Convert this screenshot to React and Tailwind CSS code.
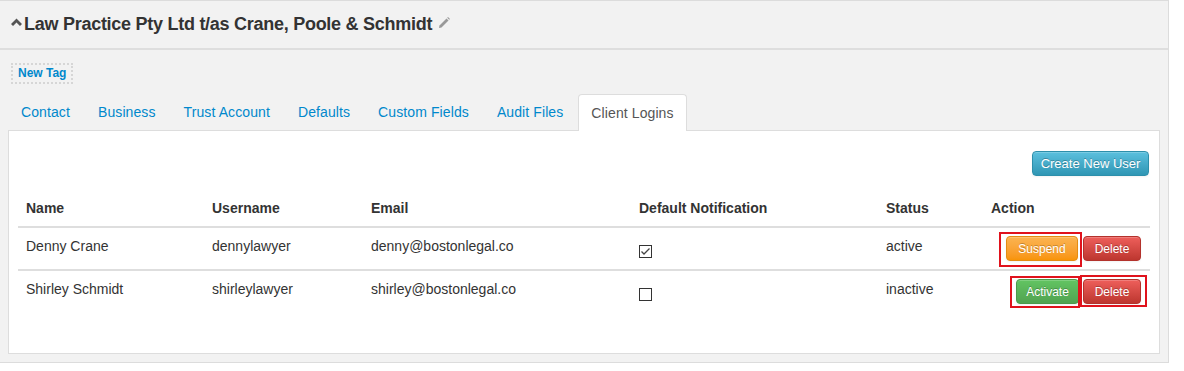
import React from "react";

const font = { fontFamily: '"Liberation Sans", Arial, sans-serif' };

function Btn({ children, kind, className = "" }) {
  const styles = {
    warning: "bg-gradient-to-b from-[#fbb450] to-[#f89406] border-[#e38d13]",
    danger: "bg-gradient-to-b from-[#ee5f5b] to-[#bd362f] border-[#b3322c]",
    success: "bg-gradient-to-b from-[#62c462] to-[#51a351] border-[#4b9a4b]",
    info: "bg-gradient-to-b from-[#5bc0de] to-[#2f96b4] border-[#2d8fab]",
  };
  return (
    <span
      className={`inline-flex items-center justify-center h-[25px] rounded-[4px] border text-white text-[12px] leading-none [text-shadow:0_-1px_0_rgba(0,0,0,0.25)] shadow-[inset_0_1px_0_rgba(255,255,255,0.2),0_1px_2px_rgba(0,0,0,0.05)] ${styles[kind]} ${className}`}
    >
      {children}
    </span>
  );
}

function Check({ checked }) {
  return (
    <span className="inline-block w-[13px] h-[13px] border border-[#333] bg-white relative">
      {checked && (
        <svg viewBox="0 0 11 11" className="absolute inset-0 w-[11px] h-[11px]">
          <path d="M1.5 5.5 L4 8 L9.5 2.5" fill="none" stroke="#444" strokeWidth="1.3" />
        </svg>
      )}
    </span>
  );
}

export default function App() {
  const tabs = ["Contact", "Business", "Trust Account", "Defaults", "Custom Fields", "Audit Files"];
  return (
    <div style={font} className="w-[1184px] h-[371px] bg-white text-[#333]">
      <div className="w-[1169px] h-[363px] bg-[#f2f2f2] border-t border-r border-b border-[#dcdcdc]">
        {/* Header */}
        <div className="h-[49px] border-b-2 border-[#dedede] flex items-center pl-[11px] pb-[1px]">
          <svg viewBox="0 0 11 8" className="w-[11px] h-[8px] mr-[2px] mt-[-5px]">
            <path d="M0 6 L5.5 0.5 L11 6 L9 8 L5.5 4.5 L2 8 Z" fill="#555" />
          </svg>
          <h1 className="text-[18px] font-bold text-[#333] leading-none tracking-[-0.27px]">
            Law Practice Pty Ltd t/as Crane, Poole &amp; Schmidt
          </h1>
          <svg viewBox="0 0 12 12" className="w-[12px] h-[12px] ml-[6px] mt-[-3px]">
            <path d="M1 11 L1.5 8.5 L8.5 1.5 L10.5 3.5 L3.5 10.5 Z" fill="#999" />
            <path d="M9.2 0.8 L10 0 L12 2 L11.2 2.8 Z" fill="#999" />
          </svg>
        </div>

        {/* New Tag */}
        <div className="pl-[11px] pt-[10px]">
          <span className="inline-flex items-center h-[21px] px-[5px] border-2 border-dotted border-[#d6d6d6] text-[12px] font-bold text-[#0088cc]">
            New Tag
          </span>
        </div>

        {/* Tabs */}
        <div className="flex items-end pl-[8px] mt-[9px] h-[37px]">
          {tabs.map((t) => (
            <span key={t} className="px-[13px] mr-[2px] h-[36px] flex items-center text-[14px] tracking-[0.1px] text-[#0088cc]">
              {t}
            </span>
          ))}
          <span className="relative top-[1px] px-[12px] h-[37px] flex items-center text-[14px] tracking-[0.1px] text-[#555] bg-white border border-b-0 border-[#ddd] rounded-t-[4px]">
            Client Logins
          </span>
        </div>

        {/* Panel */}
        <div className="ml-[8px] w-[1152px] h-[224px] bg-white border border-[#ddd]">
          <div className="flex justify-end pt-[20px] pr-[10px]">
            <Btn kind="info" className="w-[117px] text-[13px]">Create New User</Btn>
          </div>
          <table className="ml-[9px] mt-[14px] w-[1132px] border-collapse text-[14px] text-[#333] table-fixed">
            <colgroup>
              <col className="w-[186px]" />
              <col className="w-[159px]" />
              <col className="w-[268px]" />
              <col className="w-[247px]" />
              <col className="w-[105px]" />
              <col />
            </colgroup>
            <thead>
              <tr className="border-b-2 border-[#dedede]">
                {["Name", "Username", "Email", "Default Notification", "Status", "Action"].map((h) => (
                  <th key={h} className="text-left font-bold px-[8px] py-[8px] leading-[20px]">
                    {h}
                  </th>
                ))}
              </tr>
            </thead>
            <tbody>
              <tr className="border-b-2 border-[#dedede]">
                <td className="px-[8px] py-[8px] leading-[20px] align-top">Denny Crane</td>
                <td className="px-[8px] py-[8px] leading-[20px] align-top">dennylawyer</td>
                <td className="px-[8px] py-[8px] leading-[20px] align-top">denny@bostonlegal.co</td>
                <td className="px-[8px] pt-[15px] align-top"><Check checked /></td>
                <td className="px-[8px] py-[8px] leading-[20px] align-top">active</td>
                <td className="px-[8px] py-[8px] align-top">
                  <div className="flex justify-end items-center pr-[1px]">
                    <span className="relative">
                      <Btn kind="warning" className="w-[72px]">Suspend</Btn>
                      <span className="absolute left-[-7px] right-[-4px] top-[-4px] bottom-[-6px] border-2 border-[#e0121c]" />
                    </span>
                    <Btn kind="danger" className="w-[58px] ml-[5px]">Delete</Btn>
                  </div>
                </td>
              </tr>
              <tr>
                <td className="px-[8px] py-[8px] leading-[20px] align-top">Shirley Schmidt</td>
                <td className="px-[8px] py-[8px] leading-[20px] align-top">shirleylawyer</td>
                <td className="px-[8px] py-[8px] leading-[20px] align-top">shirley@bostonlegal.co</td>
                <td className="px-[8px] pt-[15px] align-top"><Check /></td>
                <td className="px-[8px] py-[8px] leading-[20px] align-top">inactive</td>
                <td className="px-[8px] py-[8px] align-top">
                  <div className="flex justify-end items-center pr-[1px]">
                    <span className="relative">
                      <Btn kind="success" className="w-[63px]">Activate</Btn>
                      <span className="absolute left-[-6px] right-[-1px] top-[-3px] bottom-[-4px] border-2 border-[#e0121c]" />
                    </span>
                    <span className="relative ml-[4px]">
                      <Btn kind="danger" className="w-[58px]">Delete</Btn>
                      <span className="absolute left-[-3px] right-[-6px] top-[-4px] bottom-[-3px] border-2 border-[#e0121c]" />
                    </span>
                  </div>
                </td>
              </tr>
            </tbody>
          </table>
        </div>
      </div>
    </div>
  );
}
